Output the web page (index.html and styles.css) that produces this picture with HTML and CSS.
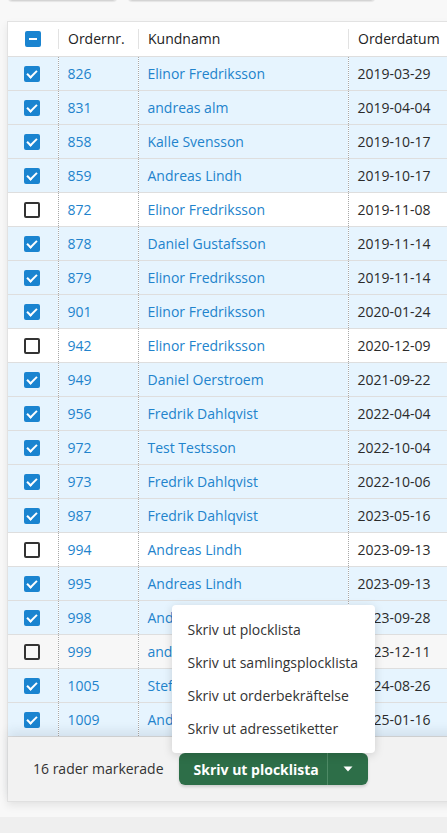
FILE: index.html
```html
<!DOCTYPE html>
<html lang="sv">
<head>
    <meta charset="UTF-8">
    <meta name="viewport" content="width=device-width, initial-scale=1.0">
    <title>Ordrar</title>
    <link rel="stylesheet" href="styles.css">
</head>
<body>
    <div class="filters">
        <input type="text" class="filter-input filter-small">
        <input type="text" class="filter-input filter-wide">
    </div>

    <section class="order-card">
        <table class="order-table">
            <thead>
                <tr>
                    <th class="col-check"><span class="checkbox indeterminate"></span></th>
                    <th class="col-nr"><span class="th-label">Ordernr.</span></th>
                    <th class="col-name"><span class="th-label">Kundnamn</span></th>
                    <th class="col-date"><span class="th-label">Orderdatum</span></th>
                </tr>
            </thead>
            <tbody id="orderRows">
                <!-- Dynamically populated -->
            </tbody>
        </table>

        <div class="card-footer">
            <span class="selected-count">16 rader markerade</span>
            <div class="split-button">
                <button class="btn-print">Skriv ut plocklista</button>
                <button class="btn-caret" aria-label="Fler val">
                    <svg width="10" height="6" viewBox="0 0 10 6"><path d="M0.5 0.5h9L5 5.5z" fill="white"/></svg>
                </button>
                <ul class="print-menu">
                    <li>Skriv ut plocklista</li>
                    <li>Skriv ut samlingsplocklista</li>
                    <li>Skriv ut orderbekräftelse</li>
                    <li>Skriv ut adressetiketter</li>
                </ul>
            </div>
        </div>
    </section>

    <div class="lower-panel"></div>

    <script>
        const orders = [
            [826, 'Elinor Fredriksson', '2019-03-29', true],
            [831, 'andreas alm', '2019-04-04', true],
            [858, 'Kalle Svensson', '2019-10-17', true],
            [859, 'Andreas Lindh', '2019-10-17', true],
            [872, 'Elinor Fredriksson', '2019-11-08', false],
            [878, 'Daniel Gustafsson', '2019-11-14', true],
            [879, 'Elinor Fredriksson', '2019-11-14', true],
            [901, 'Elinor Fredriksson', '2020-01-24', true],
            [942, 'Elinor Fredriksson', '2020-12-09', false],
            [949, 'Daniel Oerstroem', '2021-09-22', true],
            [956, 'Fredrik Dahlqvist', '2022-04-04', true],
            [972, 'Test Testsson', '2022-10-04', true],
            [973, 'Fredrik Dahlqvist', '2022-10-06', true],
            [987, 'Fredrik Dahlqvist', '2023-05-16', true],
            [994, 'Andreas Lindh', '2023-09-13', false],
            [995, 'Andreas Lindh', '2023-09-13', true],
            [998, 'Andreas Lindh', '2023-09-28', true],
            [999, 'andreas alm', '2023-12-11', false],
            [1005, 'Stefan Nilsson', '2024-08-26', true],
            [1009, 'Andreas Lindh', '2025-01-16', true]
        ];

        const body = document.getElementById('orderRows');
        orders.forEach(([nr, name, date, checked]) => {
            const row = document.createElement('tr');
            if (checked) row.className = 'selected';
            row.innerHTML = `
                <td class="col-check"><span class="checkbox ${checked ? 'checked' : ''}"></span></td>
                <td class="col-nr"><a href="#">${nr}</a></td>
                <td class="col-name"><a href="#">${name}</a></td>
                <td class="col-date">${date}</td>
            `;
            body.appendChild(row);
        });
    </script>
</body>
</html>
```

FILE: styles.css
```css
/* Base */
:root {
    --link-color: #2283cc;
    --check-color: #1a84d0;
    --row-selected: #e6f4fe;
    --row-border: #dedede;
    --green: #2d6e48;
    --text: #2b2b2b;
}

* {
    margin: 0;
    padding: 0;
    box-sizing: border-box;
    font-family: 'Open Sans', 'Liberation Sans', sans-serif;
}

html, body {
    overflow: hidden;
}

body {
    background-color: #f8f8f8;
    color: var(--text);
    font-size: 14px;
    width: 447px;
    height: 833px;
}

/* Filters (scrolled above) */
.filters {
    display: flex;
    gap: 11px;
    padding-left: 8px;
    margin-top: -33px;
}

.filter-input {
    height: 34px;
    border: 1px solid #d4d4d4;
    border-radius: 4px;
    background: white;
    box-shadow: 0 1px 1px rgba(0, 0, 0, 0.08);
}

.filter-small { width: 109px; }
.filter-wide { width: 247px; }

/* Card */
.order-card {
    margin: 20px 0 0 7px;
    width: 560px;
    background-color: white;
    border: 1px solid #e2e2e2;
    box-shadow: 0 4px 8px rgba(0, 0, 0, 0.08);
}

.order-table {
    width: 100%;
    border-collapse: collapse;
    table-layout: fixed;
}

.order-table th,
.order-table td {
    height: 34px;
    padding: 0 9px;
    text-align: left;
    white-space: nowrap;
    overflow: hidden;
    font-weight: 400;
    border-bottom: 1px solid var(--row-border);
}

.order-table th {
    height: 34px;
    color: #222;
    font-size: 14px;
    padding: 0;
}

.th-label {
    display: block;
    padding: 0 9px;
    line-height: 20px;
    border-left: 1px solid #e2e2e2;
}

.order-table td + td {
    border-left: 1px dotted #a8a8a8;
}

.col-check {
    width: 50px;
    text-align: center !important;
}

.order-table .col-check {
    padding: 0 1px 0 0;
}

.col-nr { width: 80px; }
.col-name { width: 210px; }
.col-date { width: 220px; color: #2b2b2b; }

.order-table a {
    color: var(--link-color);
    text-decoration: none;
}

.order-table tbody tr:nth-child(even) {
    background-color: #f7f7f7;
}

.order-table tbody tr.selected {
    background-color: var(--row-selected);
}

/* Checkboxes */
.checkbox {
    display: inline-block;
    width: 16px;
    height: 16px;
    border: 2px solid #333;
    border-radius: 2px;
    vertical-align: middle;
    position: relative;
    top: -1px;
}

.checkbox.checked,
.checkbox.indeterminate {
    background-color: var(--check-color);
    border-color: var(--check-color);
}

.checkbox.checked::after {
    content: '';
    position: absolute;
    left: 3px;
    top: 0px;
    width: 4px;
    height: 8px;
    border: solid white;
    border-width: 0 2px 2px 0;
    transform: rotate(45deg);
}

.checkbox.indeterminate::after {
    content: '';
    position: absolute;
    left: 2px;
    top: 5px;
    width: 8px;
    height: 2px;
    background: white;
}

/* Footer */
.card-footer {
    display: flex;
    align-items: center;
    gap: 15px;
    height: 64px;
    padding-left: 25px;
    background-color: #f2f2f2;
    position: relative;
    box-shadow: 0 -6px 10px rgba(40, 60, 80, 0.10);
}

.selected-count {
    color: #333;
    font-size: 14px;
}

.split-button {
    display: flex;
    position: relative;
    height: 32px;
    margin-top: 1px;
    border-radius: 6px;
    box-shadow: 0 2px 3px rgba(0, 0, 0, 0.15);
}

.btn-print,
.btn-caret {
    background-color: var(--green);
    color: white;
    border: none;
    font-size: 14px;
    font-weight: 700;
    white-space: nowrap;
    cursor: pointer;
}

.btn-print {
    width: 149px;
    padding: 0 15px;
    border-radius: 6px 0 0 6px;
    border-right: 1px solid #4e8a66;
}

.btn-caret {
    width: 40px;
    border-radius: 0 6px 6px 0;
    display: flex;
    align-items: center;
    justify-content: center;
}

/* Dropdown */
.print-menu {
    list-style: none;
    position: absolute;
    left: -7px;
    bottom: 32px;
    width: 203px;
    padding: 8px 0;
    background: white;
    border-radius: 4px;
    box-shadow: 0 2px 10px rgba(0, 0, 0, 0.15);
    z-index: 10;
}

.print-menu li {
    height: 33px;
    line-height: 33px;
    padding: 0 16px;
    color: #333;
    font-size: 14px;
    white-space: nowrap;
}

.lower-panel {
    margin-top: 15px;
    height: 40px;
    background-color: #efefef;
}
```
